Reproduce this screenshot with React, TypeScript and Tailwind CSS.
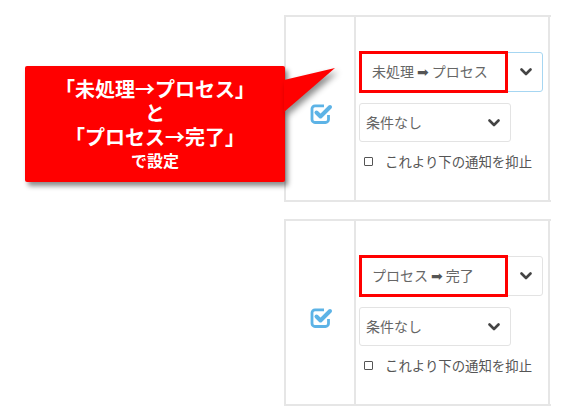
const jp = { fontFamily: '"Noto Sans CJK JP", "Noto Sans", sans-serif' };

function Chevron() {
  return (
    <svg width="12" height="8" viewBox="0 0 12 8" className="shrink-0">
      <path d="M1.5 1.5 L6 6 L10.5 1.5" fill="none" stroke="#444" strokeWidth="2.6" strokeLinecap="round" strokeLinejoin="round" />
    </svg>
  );
}

function CheckedIcon() {
  return (
    <svg width="23" height="22" viewBox="0 0 23 22">
      <path d="M14 2.8 H5 A3 3 0 0 0 2 5.8 V16.5 A3 3 0 0 0 5 19.5 H15.5 A3 3 0 0 0 18.5 16.5 V12" fill="none" stroke="#5db3e6" strokeWidth="2.8" />
      <path d="M6.5 9.5 L10.5 13.5 L20 4" fill="none" stroke="#5db3e6" strokeWidth="4" strokeLinecap="round" strokeLinejoin="round" />
    </svg>
  );
}

function Arrow() {
  return <span className="mx-[3px] text-[#555]" style={{ fontFamily: '"DejaVu Sans", sans-serif' }}>➡</span>;
}

function Row({ status, focused }: { status: React.ReactNode; focused: boolean }) {
  return (
    <div className="flex h-[187px] w-[267px] border-y-2 border-l-2 border-[#e6e6e6]">
      <div className="flex w-[70px] items-center justify-center border-r-2 border-[#e6e6e6] pl-[2px] pt-[10px]">
        <CheckedIcon />
      </div>
      <div className="flex w-[194px] flex-col border-r-2 border-[#e6e6e6] pl-[3px] pt-[35px]">
        <div
          className={`relative flex h-[40px] w-[184px] items-center justify-between rounded-[3px] border pl-[12px] pr-[10px] ${
            focused ? 'border-[#a6d6f2]' : 'border-[#e3e3e3]'
          }`}
        >
          <span className="text-[14px] text-[#666]">{status}</span>
          <Chevron />
          <div className="absolute -left-px -top-[2px] -bottom-[2px] w-[149px] border-[3.5px] border-[#ff0000]" />
        </div>
        <div className="mt-[11px] flex h-[39px] w-[152px] items-center justify-between rounded-[3px] border border-[#e3e3e3] pl-[6px] pr-[10px]">
          <span className="text-[14px] text-[#666]">条件なし</span>
          <Chevron />
        </div>
        <label className="mt-[9px] flex items-center pl-[5px] text-[13.4px] leading-[20px] text-[#555]">
          <span className="mr-[12px] h-[9px] w-[9px] rounded-[1px] border border-[#555]" />
          これより下の通知を抑止
        </label>
      </div>
      <div className="w-px" />
    </div>
  );
}

export default function App() {
  return (
    <div className="relative h-[417px] w-[567px] overflow-hidden bg-white" style={jp}>
      <div className="flex flex-col gap-[17px] pl-[284px] pt-[15px]">
        <Row
          focused
          status={
            <>
              未処理<Arrow />プロセス
            </>
          }
        />
        <Row
          focused={false}
          status={
            <>
              プロセス<Arrow />完了
            </>
          }
        />
      </div>

      {/* callout annotation */}
      <div className="absolute left-[25px] top-[66px] flex h-[116px] w-[260px] flex-col items-center rounded-[2px] bg-[#ff0000] pt-[11px] font-bold text-white shadow-[3px_4px_5px_rgba(0,0,0,0.45)]">
        <div className="text-[20px] leading-[24px]">「未処理→プロセス」</div>
        <div className="text-[20px] leading-[24px]">と</div>
        <div className="text-[20px] leading-[24px]">「プロセス→完了」</div>
        <div className="text-[16px] leading-[22px]">で設定</div>
      </div>
      <svg
        className="absolute left-[280px] top-[60px]"
        width="60"
        height="60"
        viewBox="0 0 60 60"
        style={{ filter: 'drop-shadow(3px 4px 3px rgba(0,0,0,0.45))' }}
      >
        <polygon points="4,20 55,8 4,52" fill="#ff0000" />
      </svg>
    </div>
  );
}
